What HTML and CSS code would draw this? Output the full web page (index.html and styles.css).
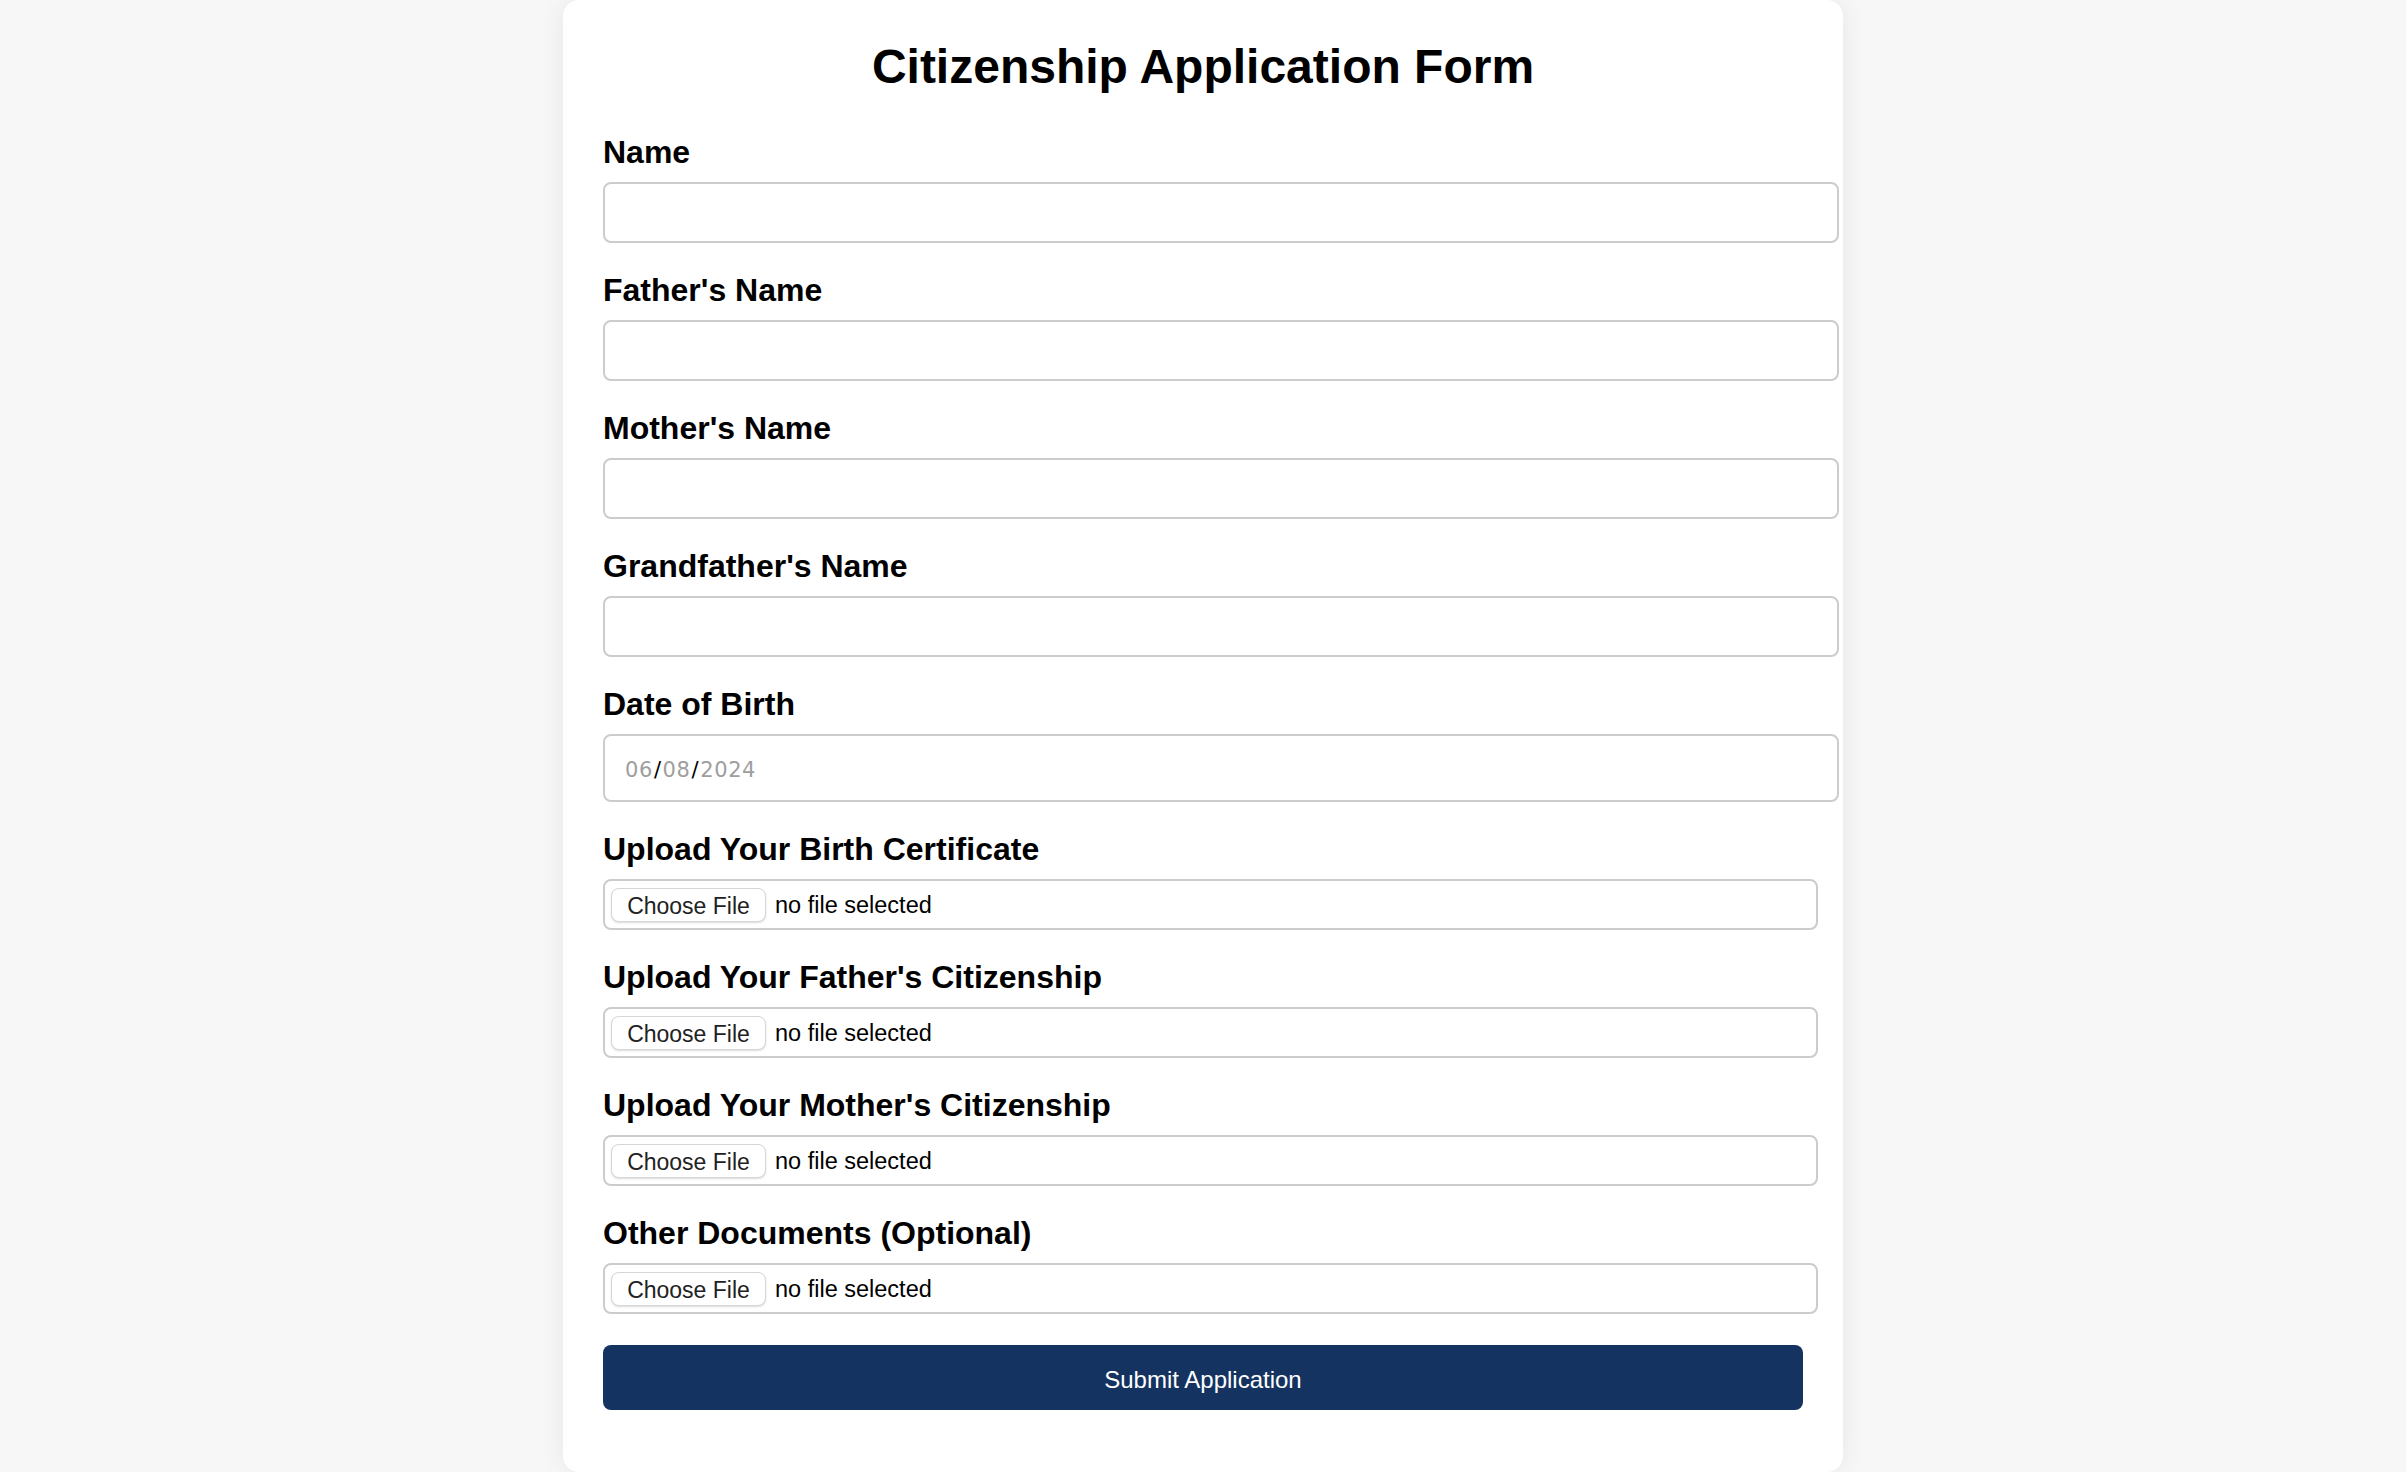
FILE: index.html
```html
<!DOCTYPE html>
<html lang="en">
<head>
<meta charset="utf-8">
<title>Citizenship Application Form</title>
<link rel="stylesheet" href="styles.css">
</head>
<body>
<main class="card">
  <h1 class="title">Citizenship Application Form</h1>
  <form class="form">
    <div class="field">
      <label class="label" for="name">Name</label>
      <input class="text-input" id="name" type="text">
    </div>
    <div class="field">
      <label class="label" for="father">Father's Name</label>
      <input class="text-input" id="father" type="text">
    </div>
    <div class="field">
      <label class="label" for="mother">Mother's Name</label>
      <input class="text-input" id="mother" type="text">
    </div>
    <div class="field">
      <label class="label" for="grandfather">Grandfather's Name</label>
      <input class="text-input" id="grandfather" type="text">
    </div>
    <div class="field">
      <label class="label">Date of Birth</label>
      <div class="date-input"><span class="dpart">06</span><span class="dsep">/</span><span class="dpart">08</span><span class="dsep">/</span><span class="dpart">2024</span></div>
    </div>
    <div class="field">
      <label class="label">Upload Your Birth Certificate</label>
      <div class="file-input"><span class="file-btn">Choose File</span><span class="file-text">no file selected</span></div>
    </div>
    <div class="field">
      <label class="label">Upload Your Father's Citizenship</label>
      <div class="file-input"><span class="file-btn">Choose File</span><span class="file-text">no file selected</span></div>
    </div>
    <div class="field">
      <label class="label">Upload Your Mother's Citizenship</label>
      <div class="file-input"><span class="file-btn">Choose File</span><span class="file-text">no file selected</span></div>
    </div>
    <div class="field">
      <label class="label">Other Documents (Optional)</label>
      <div class="file-input"><span class="file-btn">Choose File</span><span class="file-text">no file selected</span></div>
    </div>
    <button class="submit" type="button">Submit Application</button>
  </form>
</main>
</body>
</html>
```

FILE: styles.css
```css
html, body {
  margin: 0;
  padding: 0;
}

body {
  background: #f7f7f7;
  font-family: "Liberation Sans", Arial, sans-serif;
  color: #000;
  height: 1472px;
  overflow: hidden;
}

.card {
  box-sizing: border-box;
  width: 1280px;
  margin: 0 auto;
  background: #fff;
  border-radius: 16px;
  padding: 40px 40px 62px;
  box-shadow: 0 0 26px rgba(0, 0, 0, 0.07);
}

.title {
  margin: 0 0 40px;
  font-size: 48px;
  line-height: 54px;
  font-weight: 700;
  text-align: center;
}

.form {
  display: flex;
  flex-direction: column;
}

.field {
  margin-bottom: 29px;
}

.label {
  display: block;
  font-size: 32px;
  line-height: 36px;
  font-weight: 700;
  margin-bottom: 12px;
}

.text-input {
  display: block;
  box-sizing: border-box;
  width: calc(100% + 36px);
  height: 61px;
  margin: 0;
  padding: 0 16px;
  border: 2px solid #cccccc;
  border-radius: 8px;
  background: #fff;
  font-family: "Liberation Sans", Arial, sans-serif;
  font-size: 26px;
  outline: none;
}

.date-input {
  box-sizing: border-box;
  width: calc(100% + 36px);
  height: 68px;
  border: 2px solid #cccccc;
  border-radius: 8px;
  display: flex;
  align-items: center;
  padding: 3px 20px 0;
  font-family: "DejaVu Sans", "Liberation Sans", sans-serif;
  font-size: 21px;
  letter-spacing: 0.6px;
}

.dpart {
  color: #9e9e9e;
}

.dsep {
  color: #000;
  margin: 0 1px;
}

.file-input {
  box-sizing: border-box;
  width: calc(100% + 15px);
  height: 51px;
  border: 2px solid #cccccc;
  border-radius: 8px;
  display: flex;
  align-items: center;
  padding: 2px 6px 0;
  font-size: 23.5px;
}

.file-btn {
  box-sizing: border-box;
  width: 155px;
  height: 34px;
  margin-top: -2px;
  display: flex;
  align-items: center;
  justify-content: center;
  background: #fff;
  border: 1px solid #d6d6d6;
  border-radius: 8px;
  box-shadow: 0 1px 2px rgba(0, 0, 0, 0.14);
  color: #222;
  font-size: 23px;
  padding-top: 3px;
}

.file-text {
  margin-left: 9px;
  color: #000;
}

.submit {
  display: block;
  width: 100%;
  height: 65px;
  margin-top: 2px;
  padding: 4px 0 0;
  border: none;
  border-radius: 8px;
  background: #143360;
  color: #fff;
  font-family: "Liberation Sans", Arial, sans-serif;
  font-size: 24px;
  cursor: pointer;
}
```
